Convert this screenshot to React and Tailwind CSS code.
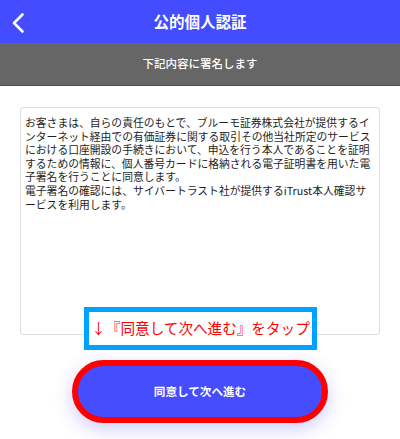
import React from "react";

const lines1 = [
  "お客さまは、自らの責任のもとで、ブルーモ証券株式会社が提供するイ",
  "ンターネット経由での有価証券に関する取引その他当社所定のサービス",
  "における口座開設の手続きにおいて、申込を行う本人であることを証明",
  "するための情報に、個人番号カードに格納される電子証明書を用いた電",
  "子署名を行うことに同意します。",
  "電子署名の確認には、サイバートラスト社が提供するiTrust本人確認サ",
  "ービスを利用します。",
];

export default function App() {
  return (
    <div
      className="w-[400px] h-[439px] bg-white relative overflow-hidden"
      style={{ fontFamily: '"Noto Sans CJK JP", "Noto Sans", sans-serif' }}
    >
      <header className="h-[43px] bg-[#444cff] flex items-center justify-center relative">
        <svg
          className="absolute left-[10px] top-[11px]"
          width="18"
          height="24"
          viewBox="0 0 18 24"
          fill="none"
        >
          <path
            d="M12.5 3.5 L4 12 L12.5 20.5"
            stroke="white"
            strokeWidth="2.6"
            strokeLinecap="round"
            strokeLinejoin="round"
          />
        </svg>
        <h1 className="text-white font-bold text-[15.5px] leading-none">公的個人認証</h1>
      </header>
      <div className="h-[43px] bg-[#666666] border-b border-[#4e4e4e] flex items-center justify-center">
        <span className="text-white font-medium text-[11.5px] leading-none">下記内容に署名します</span>
      </div>
      <div className="px-[20px] pt-[21px]">
        <div className="h-[228px] border border-[#dddddd] rounded-[3px] pt-[8px] pl-[4px] text-[#1e1e1e] text-[10.8px] leading-[13.6px]">
          {lines1.map((l, i) => (
            <div key={i} className="whitespace-nowrap">{l}</div>
          ))}
        </div>
      </div>
      <div className="flex justify-center pt-[25px]">
        <button className="w-[256px] h-[63px] rounded-full border-[6px] border-[#ff0000] bg-[#454dff] text-white font-bold text-[11.6px] shadow-[0_6px_18px_rgba(80,80,255,0.28)]">
          同意して次へ進む
        </button>
      </div>
      <div className="absolute left-[84px] top-[307px] w-[233px] h-[43px] border-[5px] border-[#00a2ff] bg-white flex items-center justify-center">
        <span className="text-[#ff0000] text-[14.6px] leading-none whitespace-nowrap">↓『同意して次へ進む』をタップ</span>
      </div>
    </div>
  );
}
